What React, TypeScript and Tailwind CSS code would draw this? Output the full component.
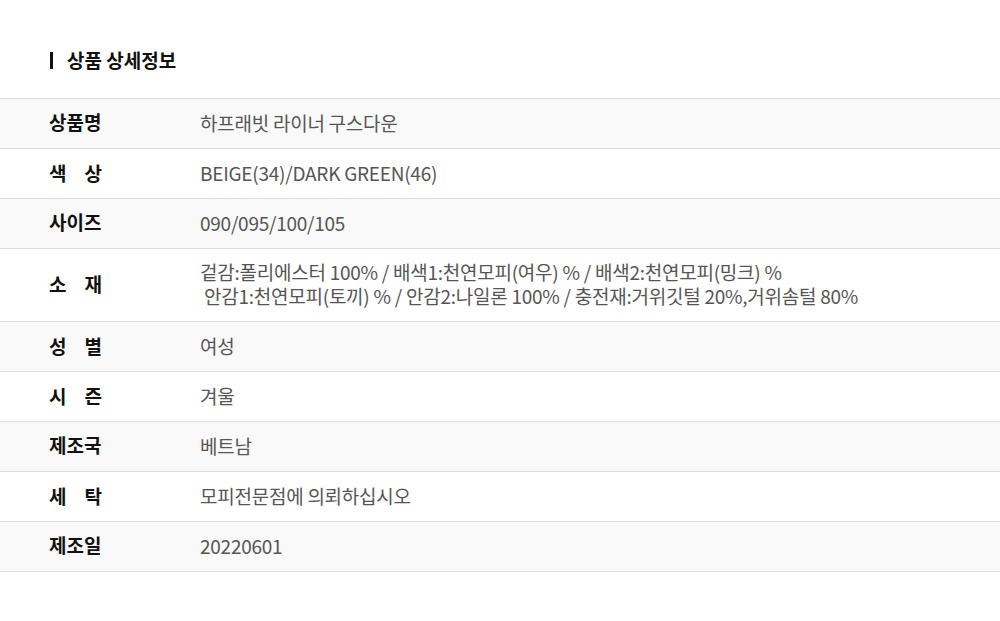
import React from 'react';

const rows: { label: string; spread?: boolean; value: React.ReactNode }[] = [
  { label: '상품명', value: '하프래빗 라이너 구스다운' },
  { label: '색상', spread: true, value: 'BEIGE(34)/DARK GREEN(46)' },
  { label: '사이즈', value: '090/095/100/105' },
  {
    label: '소재',
    spread: true,
    value: (
      <>
        겉감:폴리에스터 100% / 배색1:천연모피(여우) % / 배색2:천연모피(밍크) %
        <br />
        &nbsp;안감1:천연모피(토끼) % / 안감2:나일론 100% / 충전재:거위깃털 20%,거위솜털 80%
      </>
    ),
  },
  { label: '성별', spread: true, value: '여성' },
  { label: '시즌', spread: true, value: '겨울' },
  { label: '제조국', value: '베트남' },
  { label: '세탁', spread: true, value: '모피전문점에 의뢰하십시오' },
  { label: '제조일', value: '20220601' },
];

export default function App() {
  return (
    <div
      className="w-[1000px] h-[621px] bg-white"
      style={{ fontFamily: '"Noto Sans CJK KR", "Noto Sans", sans-serif' }}
    >
      {/* Title */}
      <div className="flex items-center h-[98px] pl-[50px] pt-[22px]">
        <span className="w-[3px] h-[17px] bg-[#111] mr-[14px]" />
        <h2 className="text-[19px] leading-[24px] font-bold text-[#111]">상품 상세정보</h2>
      </div>

      {/* Info table */}
      <div className="border-t border-[#dcdcdc]">
        {rows.map((row, i) => (
          <div
            key={row.label}
            className={`flex items-center border-b border-[#dcdcdc] pb-[2px] ${
              i % 2 === 0 ? 'bg-[#f9f9f9]' : 'bg-white'
            } ${row.label === '소재' ? 'h-[73px]' : 'h-[50px]'}`}
          >
            <div className="w-[200px] pl-[49px]">
              {row.spread ? (
                <span className="flex justify-between w-[53px] text-[19px] leading-[24px] font-bold text-[#111]">
                  {row.label.split('').map((c) => (
                    <span key={c}>{c}</span>
                  ))}
                </span>
              ) : (
                <span className="text-[19px] leading-[24px] font-bold text-[#111]">{row.label}</span>
              )}
            </div>
            <div className="text-[19px] leading-[24px] text-[#555] tracking-[-0.25px]">{row.value}</div>
          </div>
        ))}
      </div>
    </div>
  );
}
